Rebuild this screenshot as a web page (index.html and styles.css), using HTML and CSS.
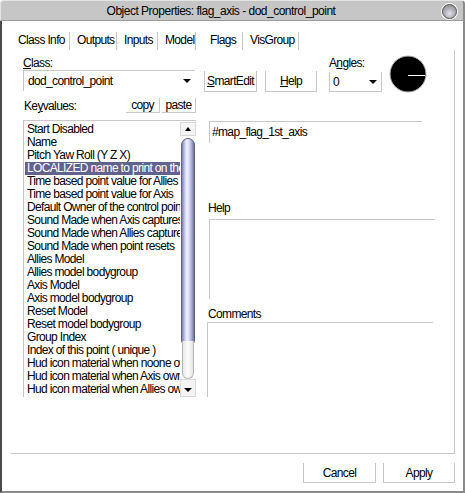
FILE: index.html
```html
<!DOCTYPE html>
<html lang="en">
<head>
  <meta charset="UTF-8">
  <title>Object Properties</title>
  <link rel="stylesheet" href="styles.css">
</head>
<body>
  <div class="window">
    <div class="titlebar">
      <span class="title">Object Properties: flag_axis - dod_control_point</span>
      <span class="close"></span>
    </div>
    <div class="frame">
      <div class="tabs">
        <a class="tab active" href="#">Class Info</a>
        <a class="tab" href="#">Outputs</a>
        <a class="tab" href="#">Inputs</a>
        <a class="tab" href="#">Model</a>
        <a class="tab tab-wide" href="#">Flags</a>
        <a class="tab" href="#">VisGroup</a>
      </div>

      <div class="panel">
        <!-- class selector, smartedit, angles -->
        <div class="top-row">
          <div class="class-field">
            <div class="label"><u>C</u>lass:</div>
            <div class="combo">
              <span>dod_control_point</span>
              <i class="arrow-down"></i>
            </div>
          </div>
          <button class="btn btn-top smartedit"><u>S</u>martEdit</button>
          <button class="btn btn-top help-btn"><u>H</u>elp</button>
          <div class="angles-field">
            <div class="label">A<u>n</u>gles:</div>
            <div class="combo angle-combo">
              <span>0</span>
              <i class="arrow-down"></i>
            </div>
          </div>
          <svg class="dial" width="38" height="38" viewBox="0 0 38 38">
            <circle cx="19" cy="19" r="18" fill="#000" stroke="#b4b4b4" stroke-width="1"/>
            <line x1="19" y1="20.5" x2="36" y2="20.5" stroke="#fff" stroke-width="1"/>
          </svg>
        </div>

        <div class="kv-row">
          <div class="label">Ke<u>y</u>values:</div>
          <div class="kv-buttons">
            <button class="btn btn-small">copy</button>
            <button class="btn btn-small">paste</button>
          </div>
        </div>

        <div class="main-row">
          <div class="listbox">
            <ul class="keys">
              <li>Start Disabled</li>
              <li>Name</li>
              <li>Pitch Yaw Roll (Y Z X)</li>
              <li class="selected">LOCALIZED name to print on the HUD</li>
              <li>Time based point value for Allies</li>
              <li>Time based point value for Axis</li>
              <li>Default Owner of the control point</li>
              <li>Sound Made when Axis captures</li>
              <li>Sound Made when Allies captures</li>
              <li>Sound Made when point resets</li>
              <li>Allies Model</li>
              <li>Allies model bodygroup</li>
              <li>Axis Model</li>
              <li>Axis model bodygroup</li>
              <li>Reset Model</li>
              <li>Reset model bodygroup</li>
              <li>Group Index</li>
              <li>Index of this point ( unique )</li>
              <li>Hud icon material when noone owns</li>
              <li>Hud icon material when Axis owns</li>
              <li>Hud icon material when Allies owns</li>
            </ul>
            <div class="scrollbar">
              <div class="sb-btn"><i class="arrow-up"></i></div>
              <div class="sb-thumb"></div>
              <div class="sb-track"></div>
              <div class="sb-btn sb-btn-down"><i class="arrow-down"></i></div>
            </div>
          </div>

          <div class="side">
            <div class="value-box">#map_flag_1st_axis</div>
            <div class="label help-label">Help</div>
            <div class="help-box"></div>
            <div class="label comments-label">Comments</div>
            <div class="comments-box"></div>
          </div>
        </div>
      </div>

      <div class="footer">
        <button class="btn btn-foot cancel">Cancel</button>
        <button class="btn btn-foot">Apply</button>
      </div>
    </div>
  </div>
</body>
</html>
```

FILE: styles.css
```css
*{
  margin: 0;
  padding: 0;
  box-sizing: border-box;
}

body{
  width: 465px;
  height: 493px;
  background: #fff;
  font-family: "Liberation Sans", Arial, sans-serif;
  font-size: 12px;
  letter-spacing: -0.65px;
  color: #000;
  overflow: hidden;
}

u{
  text-decoration: underline;
  text-underline-offset: 1px;
}

.window{
  width: 465px;
  height: 493px;
  display: flex;
  flex-direction: column;
}

/* title bar */
.titlebar{
  height: 21px;
  background: #c6c6c6;
  border-top: 1px solid #e4e4e4;
  border-left: 1px solid #e4e4e4;
  border-right: 2px solid #8a8a8a;
  border-bottom: 1px solid #9c9c9c;
  border-radius: 4px 4px 0 0;
  display: flex;
  align-items: center;
  justify-content: center;
  padding-right: 22px;
  position: relative;
}

.title{
  line-height: 18px;
  letter-spacing: -0.5px;
}

.close{
  position: absolute;
  right: 6px;
  top: 3px;
  width: 15px;
  height: 15px;
  border-radius: 50%;
  border: 1px solid #5c5c5c;
  box-shadow: 0 0 0 1px #fff;
  background: radial-gradient(circle at 50% 65%, #e2e2ea 0%, #a8a8b0 55%, #7c7c84 100%);
}

.frame{
  flex: 1;
  border-left: 2px solid #4a4a4a;
  border-right: 2px solid #8a8a8a;
  border-bottom: 2px solid #8a8a8a;
  display: flex;
  flex-direction: column;
}

/* tabs */
.tabs{
  display: grid;
  grid-template-columns: 59px 47px 41px 38px 47px 56px;
  margin: 11px 0 0 9px;
  height: 18px;
}

.tab{
  color: #000;
  text-decoration: none;
  line-height: 17px;
  padding-left: 7px;
  border-right: 1px solid #c8c8c8;
  white-space: nowrap;
}

.tab-wide{
  padding-left: 14px;
}

/* tab page */
.panel{
  margin-left: 9px;
  width: 444px;
  height: 404px;
  border-right: 1px solid #c8c8c8;
  border-bottom: 1px solid #c8c8c8;
  padding: 6px 0 0 12px;
}

.label{
  line-height: 14px;
  white-space: nowrap;
}

.top-row{
  display: flex;
  align-items: flex-start;
}

.class-field{
  width: 172px;
}

.combo{
  height: 21px;
  border-top: 1px solid #c8c8c8;
  border-left: 1px solid #c8c8c8;
  display: flex;
  align-items: center;
  justify-content: space-between;
  padding: 0 4px 0 4px;
}

.arrow-down{
  width: 0;
  height: 0;
  border-left: 4px solid transparent;
  border-right: 4px solid transparent;
  border-top: 4px solid #000;
}

.arrow-up{
  width: 0;
  height: 0;
  border-left: 3px solid transparent;
  border-right: 3px solid transparent;
  border-bottom: 4px solid #000;
}

.btn{
  font: inherit;
  letter-spacing: inherit;
  color: #000;
  background: #fff;
  border: 1px solid #c8c8c8;
  border-top: none;
  cursor: pointer;
}

.btn-top{
  margin-top: 15px;
  height: 21px;
}

.smartedit{
  width: 53px;
  margin-left: 9px;
}

.help-btn{
  width: 52px;
  margin-left: 8px;
}

.angles-field{
  width: 53px;
  margin-left: 12px;
}

.angle-combo{
  margin-top: 2px;
  height: 20px;
  border-top: none;
  border-bottom: 1px solid #c8c8c8;
  border-right: 1px solid #c8c8c8;
  padding: 0 4px 0 3px;
}

.dial{
  margin: -1px 0 0 7px;
}

/* keyvalues header */
.kv-row{
  width: 173px;
  margin-top: 5px;
  display: flex;
  justify-content: space-between;
  align-items: flex-end;
}

.kv-row .label{
  margin-left: 1px;
}

.kv-buttons{
  display: flex;
  gap: 2px;
}

.btn-small{
  height: 15px;
  width: 34px;
  border-left: none;
  line-height: 13px;
}

.main-row{
  display: flex;
  margin-top: 7px;
}

/* key list */
.listbox{
  width: 173px;
  height: 277px;
  border-top: 1px solid #c8c8c8;
  border-left: 1px solid #c8c8c8;
  display: flex;
  overflow: hidden;
}

.keys{
  list-style: none;
  flex: 1;
  padding-top: 2px;
  overflow: hidden;
}

.keys li{
  height: 13px;
  line-height: 13px;
  margin-left: 1px;
  padding-left: 2px;
  white-space: nowrap;
  overflow: hidden;
}

.keys li.selected{
  background: #62628e;
  color: #fff;
}

.scrollbar{
  width: 16px;
  display: flex;
  flex-direction: column;
  padding-top: 1px;
  background: #fff;
}

.sb-btn{
  height: 14px;
  display: flex;
  align-items: center;
  justify-content: center;
  background: #f4f4f4;
  border: 1px solid #d8d8d8;
}

.sb-btn-down{
  height: 18px;
  padding-top: 3px;
}

.sb-thumb{
  height: 209px;
  margin: 2px 1px 0 1px;
  border-radius: 7px;
  border: 1px solid #5e6284;
  background: linear-gradient(to right, #7c80a8 0%, #c4c6ea 22%, #f4f4ff 42%, #d2d4f2 62%, #9c9ec8 85%, #6c7096 100%);
}

.sb-track{
  flex: 1;
  margin: -6px 2px 0 2px;
  border: 1px solid #b8b8b8;
  border-top: none;
  border-radius: 0 0 6px 6px;
  background: linear-gradient(to right, #e8e8e8, #fcfcfc 50%, #e4e4e4);
}

/* value, help and comments */
.side{
  margin-left: 11px;
  width: 228px;
  display: flex;
  flex-direction: column;
}

.value-box{
  margin: 1px 0 0 2px;
  width: 213px;
  height: 22px;
  border-top: 1px solid #c8c8c8;
  border-left: 1px solid #c8c8c8;
  padding: 3px 0 0 2px;
  line-height: 14px;
}

.help-label{
  margin: 58px 0 0 1px;
}

.help-box{
  margin: 4px 0 0 2px;
  width: 226px;
  height: 80px;
  border-top: 1px solid #c8c8c8;
  border-left: 1px solid #c8c8c8;
}

.comments-label{
  margin: 8px 0 0 1px;
}

.comments-box{
  margin-top: 1px;
  width: 226px;
  height: 75px;
  border-top: 1px solid #c8c8c8;
  border-left: 1px solid #c8c8c8;
}

/* dialog buttons */
.footer{
  display: flex;
  justify-content: flex-end;
  gap: 7px;
  margin-top: 9px;
  padding-right: 8px;
}

.btn-foot{
  height: 20px;
  width: 72px;
}

.cancel{
  width: 73px;
}
```
